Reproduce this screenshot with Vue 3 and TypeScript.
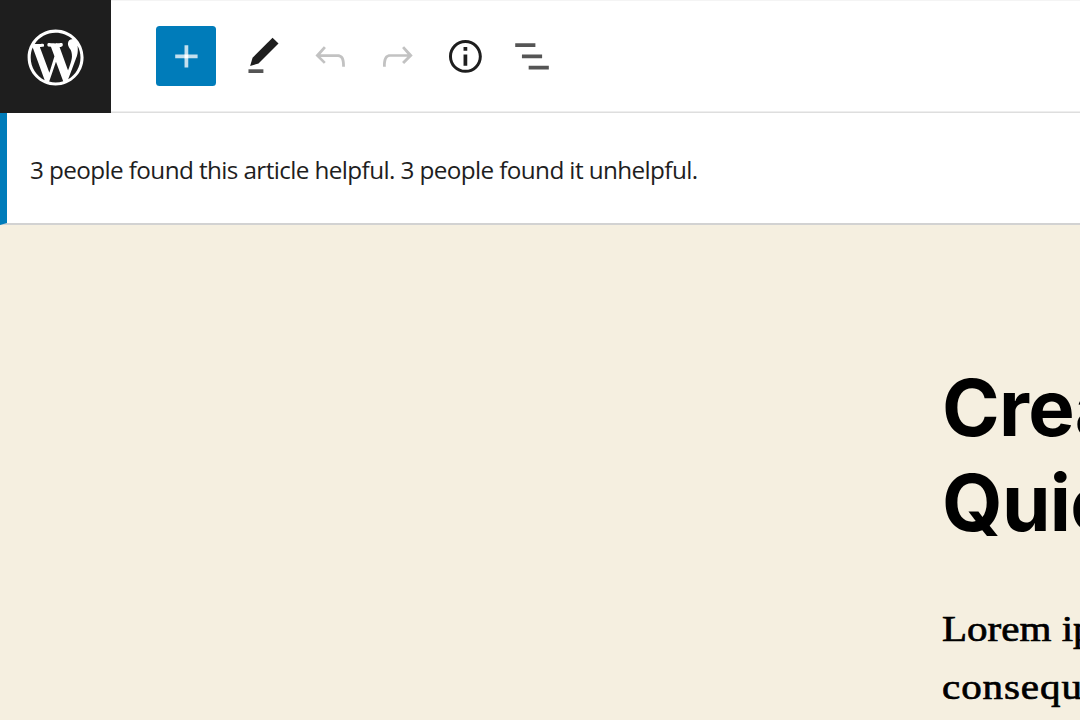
<script setup lang="ts">
interface Tool {
  name: string
  path?: string
  soft?: string
  muted?: boolean
}

const logo =
  'M20 10c0-5.51-4.49-10-10-10C4.48 0 0 4.49 0 10c0 5.52 4.48 10 10 10 5.51 0 10-4.48 10-10zM7.78 15.37L4.37 6.22c.55-.02 1.17-.08 1.17-.08.5-.06.44-1.13-.06-1.11 0 0-1.45.11-2.37.11-.18 0-.37 0-.58-.01C4.12 2.69 6.87 1.11 10 1.11c2.33 0 4.45.87 6.05 2.34-.68-.11-1.65.39-1.65 1.58 0 .74.45 1.36.9 2.1.35.61.55 1.36.55 2.46 0 1.49-1.4 5-1.4 5l-3.03-8.37c.54-.02.82-.17.82-.17.5-.05.44-1.25-.06-1.22 0 0-1.44.12-2.38.12-.87 0-2.33-.12-2.33-.12-.5-.03-.56 1.2-.06 1.22l.92.08 1.26 3.41zM17.41 10c.24-.64.74-1.87.43-4.25.7 1.29 1.05 2.71 1.05 4.25 0 3.29-1.73 6.24-4.4 7.78.97-2.59 1.94-5.2 2.92-7.78zM6.1 18.09C3.12 16.65 1.11 13.53 1.11 10c0-1.3.23-2.48.72-3.59C3.25 10.3 4.67 14.2 6.1 18.09zm4.03-6.63l2.58 6.98c-.86.29-1.76.45-2.71.45-.79 0-1.57-.11-2.29-.33.81-2.38 1.62-4.74 2.42-7.1z'

const tools: Tool[] = [
  {
    name: 'Tools',
    path: 'M20.1 5.1L16.9 2 6.2 12.7l-1.3 4.4 4.5-1.3L20.1 5.1z',
    soft: 'M4 18.9h8v2H4z',
  },
  {
    name: 'Undo',
    muted: true,
    path: 'M18.3 11.7c-.6-.6-1.4-.9-2.3-.9H6.7l2.9-3.3-1.1-1-4.5 5L8.5 16l1-1-2.7-2.7H16c.5 0 .9.2 1.3.5 1 1 1 3.4 1 4.5v.3h1.5v-.2c0-1.5 0-4.3-1.5-5.7z',
  },
  {
    name: 'Redo',
    muted: true,
    path: 'M15.6 6.5l-1.1 1 2.9 3.3H8c-.9 0-1.7.3-2.3.9-1.4 1.5-1.4 4.2-1.4 5.6v.2h1.5v-.3c0-1.1 0-3.5 1-4.5.3-.3.7-.5 1.3-.5h9.2L14.5 15l1.1 1.1 4.6-4.6-4.6-5z',
  },
  {
    name: 'Details',
    path: 'M12 3.2c-4.8 0-8.8 3.9-8.8 8.8 0 4.8 3.9 8.8 8.8 8.8 4.8 0 8.8-3.9 8.8-8.8 0-4.8-4-8.8-8.8-8.8zm0 16c-4 0-7.2-3.3-7.2-7.2C4.8 8 8 4.8 12 4.8s7.2 3.3 7.2 7.2c0 4-3.2 7.2-7.2 7.2zM11 17h2v-6h-2v6zm0-8h2V7h-2v2z',
  },
  {
    name: 'Outline',
    soft: 'M2.8 5h10.8v2H2.8zM6.4 11h10.8v2H6.4zM10 17h10.8v2H10z',
  },
]
</script>

<template>
  <div class="editor">
    <header class="bar">
      <div class="home">
        <svg class="logo" viewBox="-2 -2 24 24"><path :d="logo" /></svg>
      </div>
      <div class="tools">
        <button class="tool add" aria-label="Add block">
          <svg viewBox="0 0 24 24">
            <path class="plus" d="M18 11H6v2h12zM11 6v12h2V6z" />
            <path class="plus-core" d="M11 11h2v2h-2z" />
          </svg>
        </button>
        <button
          v-for="t in tools"
          :key="t.name"
          class="tool"
          :class="{ muted: t.muted }"
          :aria-label="t.name"
        >
          <svg viewBox="0 0 24 24">
            <path v-if="t.path" :d="t.path" />
            <path v-if="t.soft" class="soft" :d="t.soft" />
          </svg>
        </button>
      </div>
    </header>
    <div class="notice">
      <span>3 people found this article helpful. 3 people found it unhelpful.</span>
    </div>
    <main class="canvas">
      <h1>Crea<br />Quic</h1>
      <p>Lorem ip<br /><span class="wide">consequa</span></p>
    </main>
  </div>
</template>

<style scoped>
.editor {
  width: 1080px;
  height: 720px;
  overflow: hidden;
  display: flex;
  flex-direction: column;
  background: #fff;
  color: #1e1e1e;
}
.bar {
  height: 113px;
  flex: none;
  display: flex;
  box-sizing: border-box;
  border-top: 1px solid #f4f4f4;
  box-shadow: inset 0 -1.5px 0 #dedede;
}
.home {
  width: 111.4px;
  height: 113.4px;
  margin-top: -1px;
  padding-top: 2px;
  box-sizing: border-box;
  background: #1e1e1e;
  display: flex;
  align-items: center;
  justify-content: center;
}
.logo {
  width: 67.2px;
  height: 67.2px;
  fill: #fff;
}
.tools {
  display: flex;
  align-items: center;
  gap: 7.5px;
  height: 110px;
  padding-left: 44.8px;
}
.tool {
  width: 59.7px;
  height: 59.7px;
  flex: none;
  padding: 0;
  border: 0;
  border-radius: 3.5px;
  background: none;
  display: flex;
  align-items: center;
  justify-content: center;
}
.tool svg {
  width: 44.8px;
  height: 44.8px;
  fill: #1e1e1e;
}
.tool .soft {
  fill: #555;
}
.tool.add {
  background: #007cba;
  margin-right: 10.2px;
}
.tool.add .plus {
  fill: #c3dfee;
}
.tool.add .plus-core {
  fill: #fff;
}
.tool.muted svg {
  fill: #c2c2c2;
}
.notice {
  height: 112px;
  flex: none;
  box-sizing: border-box;
  border-left: 7.5px solid #007cba;
  border-bottom: 2px solid #d2d2d2;
  padding: 3px 0 0 23px;
  display: flex;
  align-items: center;
  font: 400 24.3px/36px "Open Sans", "Noto Sans", sans-serif;
  letter-spacing: -0.61px;
  white-space: nowrap;
}
.canvas {
  flex: 1;
  background: #f5efe0;
  padding: 135px 0 0 942px;
  color: #000;
  white-space: nowrap;
}
h1 {
  margin: 0;
  font: 700 78px/95px Inter, sans-serif;
  letter-spacing: -0.7px;
}
p {
  margin: 50px 0 0;
  font: 400 36px/58px "Liberation Serif", serif;
  -webkit-text-stroke: 0.7px #000;
  transform: scaleX(1.14);
  transform-origin: 0 0;
}
.wide {
  letter-spacing: 0.8px;
}
</style>
